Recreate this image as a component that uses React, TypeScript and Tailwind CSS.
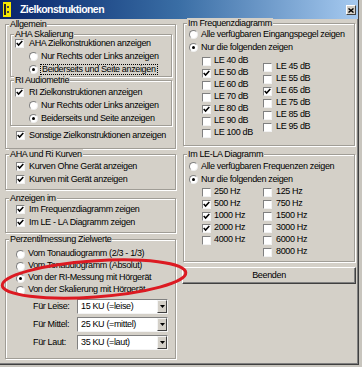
import React from 'react';

const face = "font-['Liberation_Sans',Arial,sans-serif]";

function Check({ on }: { on?: boolean }) {
  return (
    <span className="w-[9px] h-[9px] shrink-0 bg-white border border-t-[#808080] border-l-[#808080] border-r-[#f2f2f2] border-b-[#f2f2f2] flex items-center justify-center">
      {on && (
        <svg width="7" height="7" viewBox="0 0 7 7">
          <path d="M0.7 3.1 L2.6 5.1 L6.3 1.1" fill="none" stroke="#000" strokeWidth="1.5" />
        </svg>
      )}
    </span>
  );
}

function Radio({ on }: { on?: boolean }) {
  return (
    <span className="w-[9px] h-[9px] shrink-0 rounded-full bg-white border border-t-[#808080] border-l-[#808080] border-r-[#eeeeee] border-b-[#eeeeee] flex items-center justify-center">
      {on && <span className="w-[3px] h-[3px] rounded-full bg-black" />}
    </span>
  );
}

function CheckRow({ on, label, h = 'h-[13px]', gap = 'gap-[5px]' }: { on?: boolean; label: string; h?: string; gap?: string }) {
  return (
    <div className={`flex items-center ${h} ${gap} whitespace-nowrap`}>
      <Check on={on} />
      <span>{label}</span>
    </div>
  );
}

function RadioRow({ on, label, h = 'h-[13px]', focus }: { on?: boolean; label: string; h?: string; focus?: boolean }) {
  return (
    <div className={`flex items-center ${h} gap-[3px] whitespace-nowrap`}>
      <Radio on={on} />
      <span className={focus ? 'border border-dotted border-black -ml-px px-px leading-[9px]' : ''}>{label}</span>
    </div>
  );
}

function Group({ title, className = '', children }: { title: string; className?: string; children: React.ReactNode }) {
  return (
    <fieldset className={`border border-[#a09d96] shadow-[inset_1px_1px_0_#fff,1px_1px_0_#fff] ${className}`}>
      <legend className="ml-[3px] px-px leading-[10px] bg-[#d4d0c8]">{title}</legend>
      {children}
    </fieldset>
  );
}

function Combo({ value }: { value: string }) {
  return (
    <div className="w-[91px] h-[15px] bg-white flex items-stretch border border-t-[#808080] border-l-[#808080] border-r-[#f4f4f4] border-b-[#f4f4f4]">
      <span className="flex-1 pl-[3px] flex items-center">{value}</span>
      <span className="w-[10px] bg-[#d4d0c8] border border-t-[#f4f4f4] border-l-[#f4f4f4] border-r-[#404040] border-b-[#404040] flex items-center justify-center">
        <svg width="5" height="3" viewBox="0 0 5 3">
          <path d="M0 0 H5 L2.5 3 Z" fill="#000" />
        </svg>
      </span>
    </div>
  );
}

const leLeft: [string, boolean][] = [
  ['LE 40 dB', false], ['LE 50 dB', true], ['LE 60 dB', false], ['LE 70 dB', false],
  ['LE 80 dB', true], ['LE 90 dB', false], ['LE 100 dB', false],
];
const leRight: [string, boolean][] = [
  ['LE 45 dB', false], ['LE 55 dB', false], ['LE 65 dB', true], ['LE 75 dB', false],
  ['LE 85 dB', false], ['LE 95 dB', false],
];
const hzLeft: [string, boolean][] = [
  ['250 Hz', false], ['500 Hz', true], ['1000 Hz', true], ['2000 Hz', true], ['4000 Hz', false],
];
const hzRight: [string, boolean][] = [
  ['125 Hz', false], ['750 Hz', false], ['1500 Hz', false], ['3000 Hz', false], ['6000 Hz', false], ['8000 Hz', false],
];

export default function App() {
  return (
    <div className={`relative w-[362px] h-[367px] overflow-hidden bg-[#c8c5be] text-[9px] tracking-[-0.35px] text-black ${face}`}>
      <div className="w-[359px] h-[365px] bg-[#d4d0c8] border-r border-b border-r-[#404040] border-b-[#404040] shadow-[inset_-1px_-1px_0_#808080] flex flex-col">
        {/* title bar */}
        <div className="h-[19px] shrink-0 flex items-center pl-[3px] pr-[2px] bg-linear-to-r from-[#0a246a] via-[#3a6ea5] to-[#a6caf0]">
          <svg width="8" height="15" viewBox="0 0 8 15" className="shrink-0">
            <rect x="0" y="0" width="8" height="15" fill="#f3e600" />
            <rect x="1" y="2" width="2" height="11" fill="#222" />
            <rect x="4" y="4" width="2" height="2" fill="#444" />
            <rect x="4" y="9" width="2" height="2" fill="#444" />
          </svg>
          <span className="ml-[9px] text-[10.5px] tracking-[-0.55px] font-bold text-white leading-none">Zielkonstruktionen</span>
          <span className="ml-auto mt-[1px] w-[10px] h-[10px] bg-[#d4d0c8] border border-t-[#fff] border-l-[#fff] border-r-[#404040] border-b-[#404040] flex items-center justify-center">
            <svg width="6" height="5" viewBox="0 0 6 5">
              <path d="M0.5 0.5 L5.5 4.5 M5.5 0.5 L0.5 4.5" stroke="#000" strokeWidth="1.4" />
            </svg>
          </span>
        </div>

        <div className="flex pl-[5px]">
          {/* left column */}
          <div className="w-[171px] flex flex-col">
            <Group title="Allgemein" className="pb-[6px]">
              <Group title="AHA Skalierung" className="ml-[4px] mr-[3px]">
                <div className="pl-[4px] -mt-[2px]">
                  <CheckRow on label="AHA Zielkonstruktionen anzeigen" />
                  <div className="pl-[14px]">
                    <RadioRow label="Nur Rechts oder Links anzeigen" />
                    <RadioRow on focus label="Beiderseits und Seite anzeigen" />
                  </div>
                </div>
              </Group>
              <Group title="RI Audiometrie" className="ml-[4px] mr-[3px] -mt-[2px]">
                <div className="pl-[4px] pt-px">
                  <CheckRow on label="RI Zielkonstruktionen anzeigen" />
                  <div className="pl-[14px]">
                    <RadioRow label="Nur Rechts oder Links anzeigen" />
                    <RadioRow on label="Beiderseits und Seite anzeigen" />
                  </div>
                </div>
              </Group>
              <div className="pl-[10px] mt-[3px]">
                <CheckRow on label="Sonstige Zielkonstruktionen anzeigen" gap="gap-[4px]" />
              </div>
            </Group>

            <Group title="AHA und Ri Kurven" className="pb-[3px]">
              <div className="pl-[10px] pt-px">
                <CheckRow on label="Kurven Ohne Gerät anzeigen" gap="gap-[4px]" />
                <CheckRow on label="Kurven mit Gerät anzeigen" gap="gap-[4px]" />
              </div>
            </Group>

            <Group title="Anzeigen im" className="mt-[3px] pb-[3px]">
              <div className="pl-[10px]">
                <CheckRow on label="Im Frequenzdiagramm zeigen" gap="gap-[4px]" />
                <CheckRow on label="Im LE - LA Diagramm zeigen" gap="gap-[4px]" />
              </div>
            </Group>

            <Group title="Perzentilmessung Zielwerte" className="mt-px pb-[8px]">
              <div className="pl-[10px] pt-[4px]">
                <RadioRow h="h-[12px]" label="Vom Tonaudiogramm (2/3 - 1/3)" />
                <RadioRow h="h-[12px]" label="Vom Tonaudiogramm (Absolut)" />
                <RadioRow h="h-[12px]" on label="Von der RI-Messung mit Hörgerät" />
                <RadioRow h="h-[12px]" label="Von der Skalierung mit Hörgerät" />
              </div>
              <div className="pl-[27px] mt-[3px] flex flex-col gap-[3px]">
                {[
                  ['Für Leise:', '15 KU (=leise)'],
                  ['Für Mittel:', '25 KU (=mittel)'],
                  ['Für Laut:', '35 KU (=laut)'],
                ].map(([l, v]) => (
                  <div key={l} className="flex items-center h-[15px] whitespace-nowrap">
                    <span className="w-[44px] shrink-0">{l}</span>
                    <Combo value={v} />
                  </div>
                ))}
              </div>
            </Group>
          </div>

          {/* right column */}
          <div className="w-[174px] ml-[6px] flex flex-col">
            <Group title="Im Frequenzdiagramm" className="mx-px -mt-px pb-[6px]">
              <div className="pl-[5px]">
                <RadioRow label="Alle verfügbaren Eingangspegel zeigen" />
                <RadioRow on label="Nur die folgenden zeigen" />
              </div>
              <div className="flex pl-[18px] pt-px">
                <div className="w-[61px]">
                  {leLeft.map(([l, on]) => (
                    <CheckRow key={l} on={on} label={l} h="h-[12px]" gap="gap-[3px]" />
                  ))}
                </div>
                <div className="pt-[6px]">
                  {leRight.map(([l, on]) => (
                    <CheckRow key={l} on={on} label={l} h="h-[12px]" gap="gap-[4px]" />
                  ))}
                </div>
              </div>
            </Group>

            <Group title="Im LE-LA Diagramm" className="mx-px mt-[3px] pb-[3px]">
              <div className="pl-[5px] pt-px">
                <RadioRow label="Alle verfügbaren Frequenzen zeigen" />
                <RadioRow on label="Nur die folgenden zeigen" />
              </div>
              <div className="flex pl-[18px]">
                <div className="w-[61px]">
                  {hzLeft.map(([l, on]) => (
                    <CheckRow key={l} on={on} label={l} h="h-[12px]" gap="gap-[3px]" />
                  ))}
                </div>
                <div>
                  {hzRight.map(([l, on]) => (
                    <CheckRow key={l} on={on} label={l} h="h-[12px]" gap="gap-[4px]" />
                  ))}
                </div>
              </div>
            </Group>

            <button className="mt-[5px] h-[17px] w-full bg-[#d4d0c8] border border-t-[#fff] border-l-[#fff] border-r-[#404040] border-b-[#404040] shadow-[inset_-1px_-1px_0_#808080] flex items-center justify-center">
              Beenden
            </button>
          </div>
        </div>
      </div>

      {/* red annotation ellipse */}
      <svg className="absolute inset-0 pointer-events-none" width="362" height="367" viewBox="0 0 362 367">
        <ellipse cx="94" cy="279" rx="92" ry="18" fill="none" stroke="#dc1a22" strokeWidth="3" transform="rotate(-4 94 279)" />
      </svg>
    </div>
  );
}
